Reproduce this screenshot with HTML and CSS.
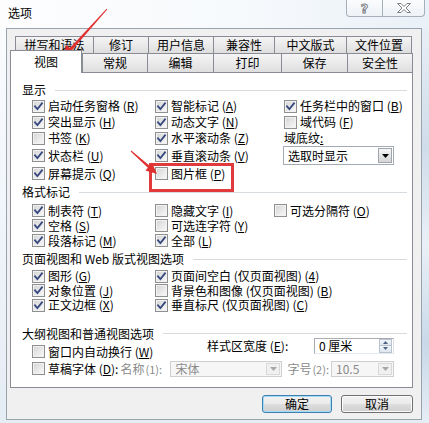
FILE: index.html
```html
<!DOCTYPE html>
<html lang="zh-CN">
<head>
<meta charset="utf-8">
<title>选项</title>
<link rel="stylesheet" href="styles.css">
</head>
<body>
<div class="screen">
  <div class="titlebar">
    <span class="title">选项</span>
    <div class="caption">
      <span class="cap-btn help">?</span>
      <span class="cap-btn close"><svg width="14" height="10" viewBox="0 0 14 10"><polygon points="0.5,0.5 4,0.5 7,3.5 10,0.5 13.5,0.5 9,5 13.5,9.5 10,9.5 7,6.5 4,9.5 0.5,9.5 5,5" fill="#fff" stroke="#7c8187" stroke-width="1"/></svg></span>
    </div>
  </div>
  <div class="frame">
    <div class="client">
      <div class="tabs">
        <div class="tabrow back">
          <span class="tab">拼写和语法</span>
          <span class="tab">修订</span>
          <span class="tab">用户信息</span>
          <span class="tab">兼容性</span>
          <span class="tab">中文版式</span>
          <span class="tab">文件位置</span>
        </div>
        <div class="tabrow front">
          <span class="tab selected">视图</span>
          <span class="tab">常规</span>
          <span class="tab">编辑</span>
          <span class="tab">打印</span>
          <span class="tab">保存</span>
          <span class="tab">安全性</span>
        </div>
      </div>
      <div class="panel">
        <div class="gt">显示</div>
        <div class="grid g-display">
          <label class="opt"><span class="cb on"><svg viewBox="0 0 11 11"><path d="M2 5.3 4.4 8 9 2.3"/></svg></span>启动任务窗格 (<u>R</u>)</label>
          <label class="opt"><span class="cb on"><svg viewBox="0 0 11 11"><path d="M2 5.3 4.4 8 9 2.3"/></svg></span>智能标记 (<u>A</u>)</label>
          <label class="opt"><span class="cb on"><svg viewBox="0 0 11 11"><path d="M2 5.3 4.4 8 9 2.3"/></svg></span>任务栏中的窗口 (<u>B</u>)</label>

          <label class="opt"><span class="cb on"><svg viewBox="0 0 11 11"><path d="M2 5.3 4.4 8 9 2.3"/></svg></span>突出显示 (<u>H</u>)</label>
          <label class="opt"><span class="cb on"><svg viewBox="0 0 11 11"><path d="M2 5.3 4.4 8 9 2.3"/></svg></span>动态文字 (<u>N</u>)</label>
          <label class="opt"><span class="cb"></span>域代码 (<u>F</u>)</label>

          <label class="opt"><span class="cb"></span>书签 (<u>K</u>)</label>
          <label class="opt"><span class="cb on"><svg viewBox="0 0 11 11"><path d="M2 5.3 4.4 8 9 2.3"/></svg></span>水平滚动条 (<u>Z</u>)</label>
          <span class="opt fieldname">域底纹<u>:</u></span>

          <label class="opt"><span class="cb on"><svg viewBox="0 0 11 11"><path d="M2 5.3 4.4 8 9 2.3"/></svg></span>状态栏 (<u>U</u>)</label>
          <label class="opt"><span class="cb on"><svg viewBox="0 0 11 11"><path d="M2 5.3 4.4 8 9 2.3"/></svg></span>垂直滚动条 (<u>V</u>)</label>
          <div class="combo shade">
            <span class="val">选取时显示</span>
            <span class="arrow"><svg width="7" height="4" viewBox="0 0 7 4"><path d="M0 0h7L3.5 4z" fill="#000"/></svg></span>
          </div>

          <label class="opt"><span class="cb on"><svg viewBox="0 0 11 11"><path d="M2 5.3 4.4 8 9 2.3"/></svg></span>屏幕提示 (<u>Q</u>)</label>
          <label class="opt"><span class="cb"></span>图片框 (<u>P</u>)</label>
          <span></span>
        </div>

        <div class="gt gt-format">格式标记</div>
        <div class="grid g-format">
          <label class="opt"><span class="cb on"><svg viewBox="0 0 11 11"><path d="M2 5.3 4.4 8 9 2.3"/></svg></span>制表符 (<u>T</u>)</label>
          <label class="opt"><span class="cb"></span>隐藏文字 (<u>I</u>)</label>
          <label class="opt"><span class="cb"></span>可选分隔符 (<u>O</u>)</label>

          <label class="opt"><span class="cb on"><svg viewBox="0 0 11 11"><path d="M2 5.3 4.4 8 9 2.3"/></svg></span>空格 (<u>S</u>)</label>
          <label class="opt"><span class="cb"></span>可选连字符 (<u>Y</u>)</label>
          <span></span>

          <label class="opt"><span class="cb on"><svg viewBox="0 0 11 11"><path d="M2 5.3 4.4 8 9 2.3"/></svg></span>段落标记 (<u>M</u>)</label>
          <label class="opt"><span class="cb on"><svg viewBox="0 0 11 11"><path d="M2 5.3 4.4 8 9 2.3"/></svg></span>全部 (<u>L</u>)</label>
          <span></span>
        </div>

        <div class="gt gt-page">页面视图和 Web 版式视图选项</div>
        <div class="grid g-page">
          <label class="opt"><span class="cb on"><svg viewBox="0 0 11 11"><path d="M2 5.3 4.4 8 9 2.3"/></svg></span>图形 (<u>G</u>)</label>
          <label class="opt"><span class="cb on"><svg viewBox="0 0 11 11"><path d="M2 5.3 4.4 8 9 2.3"/></svg></span>页面间空白 (仅页面视图) (<u>4</u>)</label>

          <label class="opt"><span class="cb on"><svg viewBox="0 0 11 11"><path d="M2 5.3 4.4 8 9 2.3"/></svg></span>对象位置 (<u>J</u>)</label>
          <label class="opt"><span class="cb"></span>背景色和图像 (仅页面视图) (<u>B</u>)</label>

          <label class="opt"><span class="cb on"><svg viewBox="0 0 11 11"><path d="M2 5.3 4.4 8 9 2.3"/></svg></span>正文边框 (<u>X</u>)</label>
          <label class="opt"><span class="cb on"><svg viewBox="0 0 11 11"><path d="M2 5.3 4.4 8 9 2.3"/></svg></span>垂直标尺 (仅页面视图) (<u>C</u>)</label>
        </div>

        <div class="gt gt-outline">大纲视图和普通视图选项</div>
        <div class="orow r1">
          <label class="opt"><span class="cb"></span>窗口内自动换行 (<u>W</u>)</label>
          <div class="fieldgroup">
            <span class="fieldlabel">样式区宽度 (<u>E</u>):</span>
            <div class="spin">
              <span class="val">0 厘米</span>
              <span class="spin-btns">
                <span class="sb"><svg width="5" height="3" viewBox="0 0 5 3"><path d="M0 3h5L2.5 0z" fill="#4d6185"/></svg></span>
                <span class="sb"><svg width="5" height="3" viewBox="0 0 5 3"><path d="M0 0h5L2.5 3z" fill="#4d6185"/></svg></span>
              </span>
            </div>
          </div>
        </div>
        <div class="orow r2">
          <label class="opt"><span class="cb"></span>草稿字体 (<u>D</u>):</label>
          <span class="dim name-label">名称<span class="small">(1):</span></span>
          <div class="combo dis wide">
            <span class="val">宋体</span>
            <span class="arrow"><svg width="7" height="4" viewBox="0 0 7 4"><path d="M0 0h7L3.5 4z" fill="#a8a8a8"/></svg></span>
          </div>
          <span class="dim size-label">字号<span class="small">(2):</span></span>
          <div class="combo dis narrow">
            <span class="val">10.5</span>
            <span class="arrow"><svg width="7" height="4" viewBox="0 0 7 4"><path d="M0 0h7L3.5 4z" fill="#a8a8a8"/></svg></span>
          </div>
        </div>
      </div>
      <div class="buttons">
        <span class="btn default">确定</span>
        <span class="btn cancel">取消</span>
      </div>
    </div>
    <div class="edge"></div>
  </div>
  <svg class="annot" width="429" height="423" viewBox="0 0 429 423">
    <rect x="150.5" y="164.5" width="82" height="26" fill="none" stroke="#e03a3c" stroke-width="3"/>
    <polygon points="106.6,8.7 107.4,9.3 72.2,49.9 75.5,52.9 61,60 66.6,44.9 69.9,47.9" fill="#e02f2f"/>
    <polygon points="131.3,150.6 130.7,151.4 147.9,167.7 145.4,170.5 157,174 152.1,163 149.6,165.7" fill="#e02f2f"/>
  </svg>
</div>
</body>
</html>
```

FILE: styles.css
```css
* { box-sizing: border-box; margin: 0; padding: 0; }
html, body { width: 429px; height: 423px; overflow: hidden; }
body {
  font-family: "Noto Sans CJK SC", "Noto Sans", sans-serif;
  font-size: 12px;
  color: #000;
  background: #eef3f8;
}
label { cursor: default; }
u { text-decoration: underline; text-underline-offset: 1px; }

.screen {
  position: relative;
  width: 429px;
  height: 423px;
  display: flex;
  flex-direction: column;
  background: linear-gradient(180deg, #fbfcfe 0%, #f3f6fa 45%, #e4ecf4 100%);
}

/* title bar */
.titlebar {
  height: 28px;
  display: flex;
  justify-content: space-between;
  align-items: flex-start;
  background: linear-gradient(90deg, #fdfdfe 0%, #f6f9fc 60%, #e9f0f7 100%);
}
.title { margin: 5px 0 0 8px; line-height: 16px; }
.caption { display: flex; margin-right: 4px; }
.cap-btn {
  height: 17px;
  display: flex;
  align-items: center;
  justify-content: center;
  border: 1px solid #a7b0ba;
  border-top: none;
  background: linear-gradient(180deg, #fbfcfd 0%, #eef2f6 100%);
}
.help {
  width: 37px;
  border-radius: 0 0 0 4px;
  font-family: "DejaVu Sans", sans-serif;
  font-weight: bold;
  font-size: 13px;
  line-height: 13px;
  color: #fff;
  -webkit-text-stroke: 1px #7c8187;
}
.close { width: 42px; border-left: none; border-radius: 0 0 4px 0; }

/* frame + client */
.frame { display: flex; height: 395px; }
.client {
  margin-left: 6px;
  width: 416px;
  height: 392px;
  border: 1px solid #98a3ae;
  background: #f0f0f0;
  padding: 7px 8px 0 3px;
  display: flex;
  flex-direction: column;
}
.edge {
  flex: 1;
  background: linear-gradient(180deg, #e8eff6 0%, #cfdcea 30%, #e9f0f7 55%, #c9d9e9 80%, #e6edf5 100%);
}

/* tabs */
.tabs { display: flex; flex-direction: column; }
.tabrow { display: flex; }
.back { height: 17px; padding-left: 5px; }
.front { height: 19px; }
.tab {
  display: flex;
  align-items: center;
  justify-content: center;
  border: 1px solid #898c95;
  border-right: none;
  border-bottom: none;
  background: linear-gradient(180deg, #f4f4f4 0%, #eaeaea 50%, #dedede 100%);
  line-height: 14px;
  white-space: nowrap;
}
.tab:last-child { border-right: 1px solid #898c95; }
.back .tab:nth-child(1) { width: 78px; }
.back .tab:nth-child(2) { width: 55px; }
.back .tab:nth-child(3) { width: 65px; }
.back .tab:nth-child(4) { width: 61px; }
.back .tab:nth-child(5) { width: 72px; }
.back .tab:nth-child(6) { width: 66px; }
.front .tab:nth-child(1) { width: 72px; }
.front .tab:nth-child(2) { width: 65px; }
.front .tab:nth-child(3) { width: 66px; }
.front .tab:nth-child(4) { width: 68px; }
.front .tab:nth-child(5) { width: 66px; }
.front .tab:nth-child(6) { width: 66px; }
.tab.selected {
  background: #fff;
  border-right: 1px solid #898c95;
  margin-top: -3px;
  margin-bottom: -1px;
  position: relative;
  z-index: 1;
}

/* panel */
.panel {
  height: 316px;
  border: 1px solid #898c95;
  background: #fff;
  padding: 9px 5px 0 11px;
  display: flex;
  flex-direction: column;
}
.gt {
  display: flex;
  align-items: center;
  height: 16px;
  line-height: 16px;
  white-space: nowrap;
}
.gt::after {
  content: "";
  flex: 1;
  height: 0;
  border-top: 1px solid #d6dbe0;
  margin-left: 9px;
}
.gt-format { margin-top: 2px; line-height: 14px; }
.gt-page { margin-top: 3px; line-height: 14px; }
.gt-outline { margin-top: 15px; height: 12px; line-height: 12px; }

.grid { display: grid; margin-left: 10px; }
.g-display {
  grid-template-columns: 123px 129px 1fr;
  grid-template-rows: 16px 16px 16px 19px 17px;
}
.g-format {
  margin-top: 3px;
  grid-template-columns: 123px 119px 1fr;
  grid-template-rows: 15px 15px 15px;
}
.g-page {
  margin-top: 2px;
  grid-template-columns: 123px 1fr;
  grid-template-rows: 14.5px 14.5px 14.5px;
}

.opt {
  display: flex;
  align-items: center;
  white-space: nowrap;
  line-height: 16px;
}
.g-format .opt, .g-page .opt { line-height: 14px; }

.cb {
  flex: none;
  width: 13px;
  height: 13px;
  margin-right: 3px;
  border: 1px solid #8e8f8f;
  background: linear-gradient(135deg, #d2d2d2 0%, #e9e9e9 55%, #fafafa 100%);
  box-shadow: inset 0 0 0 1px #f2f2f2;
  display: flex;
}
.cb svg { width: 11px; height: 11px; }
.cb path {
  fill: none;
  stroke: #37487f;
  stroke-width: 1.8;
  stroke-linecap: square;
}

/* combos */
.combo {
  display: flex;
  align-items: center;
  border: 1px solid #a4abb4;
  background: #fff;
}
.combo .val { flex: 1; padding-left: 4px; line-height: 14px; white-space: nowrap; }
.combo .arrow {
  flex: none;
  width: 14px;
  align-self: stretch;
  margin: 1px;
  border: 1px solid #a0a6ae;
  background: linear-gradient(180deg, #f6f6f6 0%, #e6e6e6 50%, #d6d6d6 100%);
  display: flex;
  align-items: center;
  justify-content: center;
}
.combo.shade { width: 111px; height: 19px; margin-left: -1px; }

/* outline rows */
.orow { display: flex; margin-left: 10px; }
.r1 { height: 22px; margin-top: -2px; }
.r1 .opt { align-self: flex-end; width: 175px; }
.fieldgroup { display: flex; align-items: center; height: 16px; }
.fieldlabel { width: 107px; line-height: 12px; white-space: nowrap; }
.spin {
  width: 80px;
  height: 16px;
  border: 1px solid #abadb3;
  border-right-color: #dbdfe6;
  border-bottom-color: #e3e9ef;
  background: #fff;
  display: flex;
  align-items: center;
}
.spin .val { flex: 1; padding-left: 4px; line-height: 14px; }
.spin-btns {
  width: 13px;
  height: 14px;
  margin-right: 1px;
  display: flex;
  flex-direction: column;
}
.sb {
  flex: 1;
  border: 1px solid #b8c3cf;
  background: linear-gradient(180deg, #f3f6fa 0%, #dfe6ee 100%);
  display: flex;
  align-items: center;
  justify-content: center;
}
.sb + .sb { border-top: none; }

.r2 { height: 18px; align-items: center; padding-right: 13px; }
.r2 .opt { flex: none; }
.dim { color: #8a8a8a; white-space: nowrap; line-height: 14px; }
.dim .small { font-size: 11px; margin-left: 1px; }
.name-label { flex: 1; margin-left: 2px; }
.combo.dis {
  height: 16px;
  border-color: #cfcfcf;
  background: #f6f6f6;
  color: #8a8a8a;
}
.combo.dis .arrow { border-color: #d9d9d9; background: #f0f0f0; }
.combo.wide { width: 112px; flex: none; }
.combo.narrow { width: 63px; flex: none; }
.size-label { margin: 0 2px 0 5px; }

/* buttons */
.buttons {
  display: flex;
  justify-content: flex-end;
  gap: 9px;
  margin-top: 7px;
}
.btn {
  height: 18px;
  border: 1px solid #707070;
  border-radius: 3px;
  background: linear-gradient(180deg, #f2f2f2 0%, #ebebeb 48%, #dddddd 52%, #cfcfcf 100%);
  box-shadow: inset 0 0 0 1px #fcfcfc;
  display: flex;
  align-items: center;
  justify-content: center;
  line-height: 16px;
}
.btn.default {
  width: 70px;
  border-color: #3c7fb1;
  box-shadow: inset 0 0 0 1px #a6dbf7;
}
.btn.cancel { width: 72px; }

/* annotations drawn on top of the screenshot */
.annot {
  position: absolute;
  left: 0;
  top: 0;
  pointer-events: none;
}
```
